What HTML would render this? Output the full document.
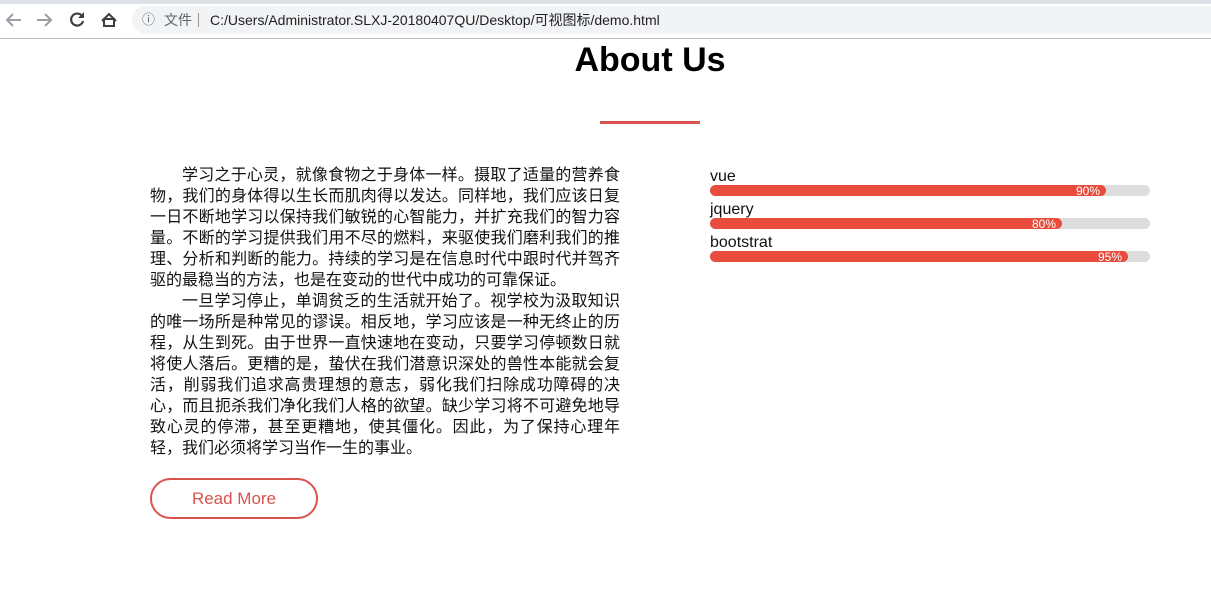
<!DOCTYPE html>
<html><head><meta charset="utf-8"><style>
*{margin:0;padding:0;box-sizing:border-box}
body{width:1211px;height:614px;overflow:hidden;background:#fff;font-family:"Liberation Sans","Noto Sans CJK SC",sans-serif;position:relative}
.top{position:absolute;left:0;top:0;width:1211px;height:39px;background:#fff;border-bottom:1px solid #bfbfbf}
.tabs{position:absolute;left:0;top:0;width:1211px;height:4px;background:#dee1e6}
.omni{position:absolute;left:132px;top:6px;width:1090px;height:28px;background:#f1f3f4;border-radius:14px;font-size:14px;color:#202124;line-height:28px}
.t{position:absolute;font-size:34px;font-weight:bold;left:0;width:1300px;text-align:center;top:41px}
.line{position:absolute;left:600px;top:121px;width:100px;height:3px;background:#d9534f}
.txt{position:absolute;left:150px;top:165px;width:470px;font-size:16px;line-height:21px;color:#111}
.txt div{text-align:justify;text-align-last:justify;white-space:nowrap}
.txt div.l{text-align-last:left}
.txt div.i{padding-left:32px}
.btn{position:absolute;left:150px;top:478px;width:168px;height:41px;border:2px solid #d9534f;border-radius:21px;color:#d9534f;font-size:17px;text-align:center;line-height:37px}
.lab{position:absolute;left:710px;font-size:16px;color:#111}
.bar{position:absolute;left:710px;width:440px;height:11px;background:#ddd;border-radius:6px}
.bar div{height:11px;background:#e74c3c;border-radius:6px;color:#fff;font-size:12px;line-height:12px;text-align:right;padding-right:6px}
</style></head><body>
<div class="top"><div class="tabs"></div>
<svg style="position:absolute;left:5px;top:11px" width="120" height="18" viewBox="0 0 120 18" fill="none" stroke-width="2">
<path d="M16 9H3M8 3L2 9l6 6" stroke="#9aa0a6"/>
<path d="M32 9h13M40 3l6 6-6 6" stroke="#9aa0a6"/>
<path d="M77 5a6 6 0 1 0 1 5" stroke="#3c4043" stroke-width="2.2"/>
<path d="M79 1v6h-6z" fill="#3c4043"/>
<path d="M97 10l7-7 7 7M99 8v7h10V8z" stroke="#3c4043"/>
</svg>
<div class="omni"><span style="position:absolute;left:10px;font-size:13px;color:#5f6368">ⓘ</span><span style="position:absolute;left:32px;color:#5f6368">文件</span><span style="position:absolute;left:66px;top:7px;width:1px;height:14px;background:#999"></span><span style="position:absolute;left:78px">C:/Users/Administrator.SLXJ-20180407QU/Desktop/可视图标/demo.html</span></div>
</div>
<div class="t">About Us</div>
<div class="line"></div>
<div class="txt">
<div class="i">学习之于心灵，就像食物之于身体一样。摄取了适量的营养食</div>
<div>物，我们的身体得以生长而肌肉得以发达。同样地，我们应该日复</div>
<div>一日不断地学习以保持我们敏锐的心智能力，并扩充我们的智力容</div>
<div>量。不断的学习提供我们用不尽的燃料，来驱使我们磨利我们的推</div>
<div>理、分析和判断的能力。持续的学习是在信息时代中跟时代并驾齐</div>
<div class="l">驱的最稳当的方法，也是在变动的世代中成功的可靠保证。</div>
<div class="i">一旦学习停止，单调贫乏的生活就开始了。视学校为汲取知识</div>
<div>的唯一场所是种常见的谬误。相反地，学习应该是一种无终止的历</div>
<div>程，从生到死。由于世界一直快速地在变动，只要学习停顿数日就</div>
<div>将使人落后。更糟的是，蛰伏在我们潜意识深处的兽性本能就会复</div>
<div>活，削弱我们追求高贵理想的意志，弱化我们扫除成功障碍的决</div>
<div>心，而且扼杀我们净化我们人格的欲望。缺少学习将不可避免地导</div>
<div>致心灵的停滞，甚至更糟地，使其僵化。因此，为了保持心理年</div>
<div class="l">轻，我们必须将学习当作一生的事业。</div>
</div>
<div class="btn">Read More</div>
<div class="lab" style="top:168px">vue</div>
<div class="bar" style="top:185px"><div style="width:396px">90%</div></div>
<div class="lab" style="top:201px">jquery</div>
<div class="bar" style="top:218px"><div style="width:352px">80%</div></div>
<div class="lab" style="top:234px">bootstrat</div>
<div class="bar" style="top:251px"><div style="width:418px">95%</div></div>
</body></html>
